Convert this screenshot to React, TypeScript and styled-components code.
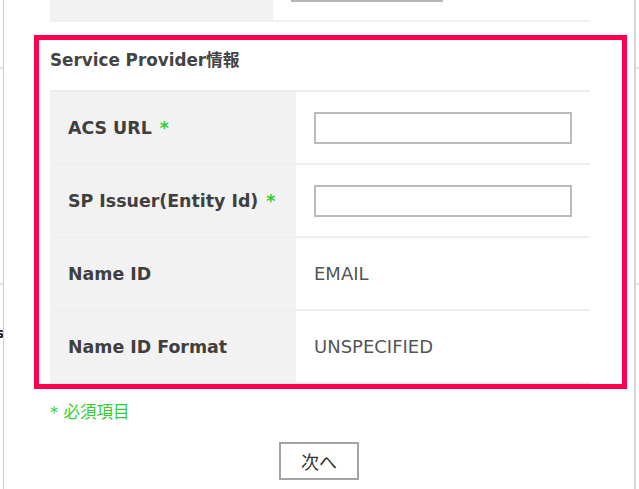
import React from "react";
import styled, { createGlobalStyle } from "styled-components";

const Global = createGlobalStyle`
  html, body { margin: 0; padding: 0; background: #fff; overflow: hidden; }
  * { box-sizing: border-box; }
`;

const FONT = `"DejaVu Sans", "Noto Sans CJK JP", sans-serif`;

const Page = styled.div`
  position: relative;
  width: 639px;
  height: 489px;
  overflow: hidden;
  font-family: ${FONT};
  background: #fff;
`;

const Backdrop = styled.div`
  display: flex;
  flex-direction: column;
`;

const BackRow = styled.div<{ $h: number }>`
  height: ${(p) => p.$h}px;
  border-bottom: 2px solid #e2e2e2;
`;

const BackLabel = styled.div`
  margin-top: 40px;
  width: 4px;
  overflow: hidden;
  display: flex;
  justify-content: flex-end;
  white-space: nowrap;
  font-size: 14px;
  font-weight: bold;
  color: #222;
`;

const Modal = styled.div`
  position: absolute;
  top: 0;
  left: 3px;
  width: 633px;
  height: 489px;
  background: #fff;
  border-left: 1px solid #cfcfcf;
  border-right: 2px solid #d6d6d6;
  display: flex;
  flex-direction: column;
  padding-left: 30px;
`;

const PrevRow = styled.div`
  margin-left: 16px;
  width: 540px;
  height: 22px;
  display: grid;
  grid-template-columns: 223px 1fr;
  border-bottom: 2px solid #f0f0f0;
`;

const PrevLabel = styled.div`
  background: #f2f2f2;
`;

const PrevValue = styled.div`
  padding-left: 18px;
  display: flex;
  align-items: flex-start;
`;

const PrevInput = styled.div`
  margin-top: -30px;
  width: 152px;
  height: 32px;
  border: 2px solid #b5b5b5;
  background: #fff;
`;

const Highlight = styled.section`
  margin-top: 13px;
  width: 593px;
  border: 5px solid #ff0050;
  padding: 0 32px 0 11px;
`;

const Heading = styled.h3`
  margin: 0;
  height: 50px;
  padding-top: 10px;
  font-size: 16.8px;
  line-height: 20px;
  font-weight: bold;
  color: #444;
`;

const Table = styled.div`
  border-top: 2px solid #ececec;
`;

const Row = styled.div`
  display: grid;
  grid-template-columns: 246px 1fr;
  height: 73px;
  border-bottom: 2px solid #efefef;
`;

const Label = styled.div`
  background: #f2f2f2;
  display: flex;
  align-items: center;
  padding-left: 18px;
  font-size: 17.4px;
  font-weight: bold;
  color: #3f3f3f;
`;

const Req = styled.span`
  color: #33cc33;
  margin-left: 8px;
`;

const Value = styled.div`
  display: flex;
  align-items: center;
  padding-left: 18px;
  font-size: 18px;
  color: #555;
`;

const TextInput = styled.input`
  width: 258px;
  height: 32px;
  border: 2px solid #bbb;
  background: #fff;
  outline: none;
  padding: 0 6px;
  font-family: ${FONT};
`;

const Note = styled.div`
  margin: 14px 0 0 16px;
  font-size: 16.5px;
  line-height: 20px;
  color: #33cc33;
`;

const Footer = styled.div`
  display: flex;
  justify-content: center;
  margin-top: 19px;
  margin-left: -30px;
`;

const NextButton = styled.button`
  width: 80px;
  height: 38px;
  background: #fff;
  border: 2px solid #a3a3a3;
  font-family: ${FONT};
  font-size: 18px;
  color: #333;
  padding: 0;
`;

type Field = { label: string; required?: boolean; input?: boolean; value?: string };

const fields: Field[] = [
  { label: "ACS URL", required: true, input: true },
  { label: "SP Issuer(Entity Id)", required: true, input: true },
  { label: "Name ID", value: "EMAIL" },
  { label: "Name ID Format", value: "UNSPECIFIED" },
];

export default function App() {
  return (
    <>
      <Global />
      <Page>
        <Backdrop>
          <BackRow $h={69} />
          <BackRow $h={216} />
          <BackLabel>Settings</BackLabel>
        </Backdrop>
        <Modal>
          <PrevRow>
            <PrevLabel />
            <PrevValue>
              <PrevInput />
            </PrevValue>
          </PrevRow>
          <Highlight>
            <Heading>Service Provider情報</Heading>
            <Table>
              {fields.map((f) => (
                <Row key={f.label}>
                  <Label>
                    {f.label}
                    {f.required && <Req>*</Req>}
                  </Label>
                  <Value>{f.input ? <TextInput type="text" /> : f.value}</Value>
                </Row>
              ))}
            </Table>
          </Highlight>
          <Note>* 必須項目</Note>
          <Footer>
            <NextButton type="button">次へ</NextButton>
          </Footer>
        </Modal>
      </Page>
    </>
  );
}
